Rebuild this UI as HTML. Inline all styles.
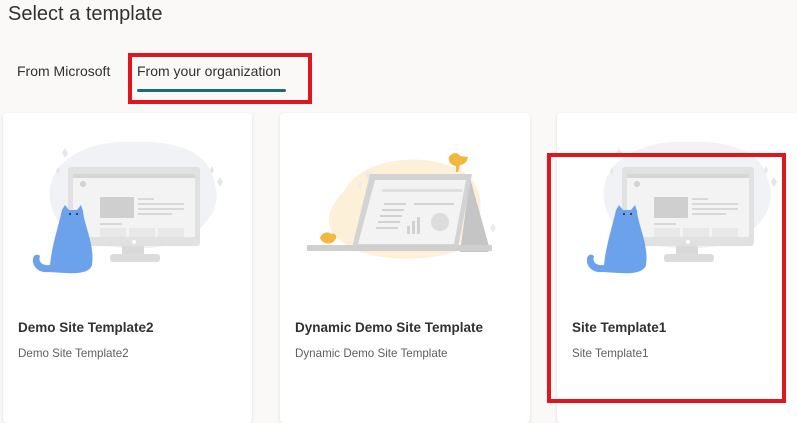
<!DOCTYPE html>
<html><head><style>
body{margin:0;width:797px;height:413px;overflow:hidden;background:#faf9f8;font-family:"Liberation Sans",sans-serif;position:relative}
.t{position:absolute;left:8px;top:3px;font-size:20px;color:#323130}
.tab{position:absolute;top:63px;font-size:14px;color:#323130}
.card{position:absolute;top:113px;width:249px;height:310px;background:#fff;border-radius:4px;box-shadow:0 1px 3px rgba(0,0,0,.12)}
.card h3{position:absolute;left:15px;top:207px;margin:0;font-size:13.5px;font-weight:bold;color:#323130}
.card p{position:absolute;left:15px;top:234px;margin:0;font-size:11.6px;color:#605e5c}
.red{position:absolute;border:4px solid #e0161e;box-sizing:border-box}
svg{position:absolute;left:0;top:0}
</style></head><body>
<div class="t">Select a template</div>
<div class="tab" style="left:17px">From Microsoft</div>
<div class="tab" style="left:137px">From your organization</div>
<div style="position:absolute;left:137px;top:89px;width:149px;height:3px;border-radius:2px;background:#1a6e72"></div>
<div class="red" style="left:128px;top:53px;width:184px;height:51px"></div>
<div class="card" style="left:3px"><h3>Demo Site Template2</h3><p>Demo Site Template2</p></div>
<div class="card" style="left:280px;width:250px"><h3>Dynamic Demo Site Template</h3><p>Dynamic Demo Site Template</p></div>
<div class="card" style="left:557px;width:250px"><h3>Site Template1</h3><p>Site Template1</p></div>
<svg width="797" height="413">
<defs>
<g id="mon">
<path d="M50,200 C45,160 90,140 130,142 C175,140 210,150 215,185 C225,215 190,250 140,248 C90,250 55,235 50,200Z" fill="#f0f2f6"/>
<path d="M62,153 l3,-5 l3,5 l-3,5z M56,171 l2,-4 l2,4 l-2,4z M210,170 l2,-4 l2,4 l-2,4z M217,182 l3,-5 l3,5 l-3,5z" fill="#e6e6e6"/>
<rect x="68" y="167" width="132" height="79" rx="3" fill="#e1e1e1"/>
<rect x="73" y="174" width="122" height="63" fill="#f3f3f3"/>
<rect x="73" y="174" width="122" height="4" fill="#d6d6d6"/>
<circle cx="83" cy="184" r="3" fill="#d2d2d2"/>
<rect x="100" y="197" width="34" height="21" fill="#cfcfcf"/>
<rect x="138" y="198" width="16" height="2" fill="#d8d8d8"/>
<rect x="138" y="203" width="46" height="2" fill="#d8d8d8"/>
<rect x="138" y="208" width="46" height="2" fill="#d8d8d8"/>
<rect x="138" y="213" width="34" height="2" fill="#d8d8d8"/>
<rect x="100" y="223" width="22" height="2" fill="#d8d8d8"/>
<rect x="100" y="228" width="26" height="9" fill="#e8e8e8"/>
<rect x="129" y="228" width="26" height="9" fill="#e8e8e8"/>
<rect x="158" y="228" width="26" height="9" fill="#e8e8e8"/>
<circle cx="134" cy="242" r="2" fill="#fff"/>
<rect x="122" y="246" width="22" height="10" fill="#d9d9d9"/>
<rect x="110" y="254" width="50" height="8" rx="3" fill="#dcdcdc"/>
<path d="M62,210 l3,-5 l4,5 l8,0 l4,-5 l2,6 C84,225 95,245 92,265 C90,272 80,274 65,273 L48,272 C40,273 34,268 33,262 C32,255 37,253 40,256 C38,262 42,266 50,265 C52,245 58,228 62,210Z" fill="#6ca2ec"/>
<circle cx="70" cy="214" r="1" fill="#222"/><circle cx="77" cy="214" r="1" fill="#222"/>
</g>
</defs>
<use href="#mon"/>
<use href="#mon" x="554"/>
<path d="M345,190 C360,160 420,150 460,170 C490,185 485,230 460,250 C420,265 360,260 340,240 C320,225 330,205 345,190Z" fill="#fdf0d8"/>
<path d="M365,175 l3,-5 l3,5 l-3,5z M358,185 l2,-4 l2,4 l-2,4z M490,228 l3,-5 l3,5 l-3,5z" fill="#ebebeb"/>
<path d="M470,178 L490,250 L488,252 L460,252z" fill="#c5c5c5"/>
<path d="M370,174 L472,174 L458,248 L352,248z" fill="#d3d3d3"/>
<path d="M375,180 L466,180 L454,244 L358,244z" fill="#f3f3f3"/>
<rect x="382" y="189" width="80" height="3" fill="#e0e0e0"/>
<g fill="#d2d2d2"><rect x="384" y="203" width="22" height="2"/><rect x="382" y="209" width="22" height="2"/><rect x="380" y="215" width="22" height="2"/><rect x="378" y="221" width="22" height="2"/><rect x="376" y="227" width="22" height="2"/><rect x="414" y="203" width="40" height="2"/><rect x="407" y="226" width="3" height="8"/><rect x="412" y="221" width="3" height="13"/><rect x="417" y="217" width="3" height="17"/></g>
<circle cx="440" cy="222" r="9" fill="#dcdcdc"/>
<rect x="307" y="245" width="185" height="6" fill="#cfcfcf"/>
<path d="M449,157 C452,152 458,152 460,156 L468,157 C467,163 463,165 460,165 L458,172 L456,172 L456,166 C450,165 448,161 449,157Z" fill="#f4b73e"/>
<path d="M320,238 C322,232 328,231 331,234 C335,232 338,237 335,240 C332,245 323,245 320,238Z" fill="#f4b73e"/>
</svg>
<div class="red" style="left:547px;top:153px;width:239px;height:250px"></div>
</body></html>
